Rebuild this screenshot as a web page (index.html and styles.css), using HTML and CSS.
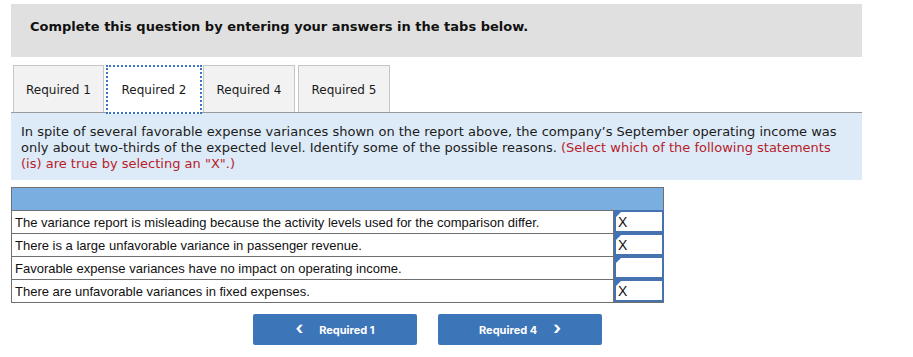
FILE: index.html
```html
<!DOCTYPE html>
<html>
<head>
<meta charset="utf-8">
<link rel="stylesheet" href="styles.css">
</head>
<body>
<div class="page">
  <div class="banner">Complete this question by entering your answers in the tabs below.</div>
  <div class="tabs">
    <div class="tab">Required 1</div>
    <div class="tab active">Required 2</div>
    <div class="tab">Required 4</div>
    <div class="tab">Required 5</div>
  </div>
  <div class="info">In spite of several favorable expense variances shown on the report above, the company’s September operating income was only about two-thirds of the expected level. Identify some of the possible reasons. <span class="red">(Select which of the following statements (is) are true by selecting an "X".)</span></div>
  <table class="grid">
    <tr class="head"><td colspan="2"></td></tr>
    <tr><td class="stmt">The variance report is misleading because the activity levels used for the comparison differ.</td><td class="ans"><div class="box">X</div></td></tr>
    <tr><td class="stmt">There is a large unfavorable variance in passenger revenue.</td><td class="ans"><div class="box">X</div></td></tr>
    <tr><td class="stmt">Favorable expense variances have no impact on operating income.</td><td class="ans"><div class="box"></div></td></tr>
    <tr><td class="stmt">There are unfavorable variances in fixed expenses.</td><td class="ans"><div class="box">X</div></td></tr>
  </table>
  <div class="nav">
    <div class="btn"><span class="chev">&lsaquo;</span><span>Required 1</span></div>
    <div class="btn"><span>Required 4</span><span class="chev">&rsaquo;</span></div>
  </div>
</div>
</body>
</html>
```
FILE: styles.css
```css
html, body { margin: 0; padding: 0; background: #fff; }
.page { padding: 4px 0 0 11px; width: 851px; font-family: "DejaVu Sans", Verdana, sans-serif; color: #222; }
.banner { background: #e0e0e0; height: 53px; box-sizing: border-box; padding: 15px 0 0 19px; font-weight: bold; font-size: 13px; color: #111; }
.tabs { display: flex; margin-top: 8px; padding-left: 2px; border-bottom: 1px solid #9a9a9a; height: 47px; box-sizing: content-box; }
.tab { box-sizing: border-box; height: 47px; padding-top: 2px; background: #f2f2f2; border: 1px solid #c6c6c6; border-bottom: none; font-size: 12px; color: #1a1a1a; display: flex; align-items: center; justify-content: center; margin-right: 2px; }
.tab:nth-child(1) { width: 91px; }
.tab:nth-child(2) { width: 96px; margin-right: 1px; }
.tab:nth-child(3) { width: 92px; margin-right: 3px; }
.tab:nth-child(4) { width: 92px; }
.tab.active { background: #fff; border: 2px dotted #3b73c4; height: 49px; margin-bottom: -2px; position: relative; padding-top: 0; }
.info { background: #dcebf7; margin-top: 0; padding: 11px 10px 9px 10px; font-size: 13px; line-height: 16px; color: #1c1c1c; height: 47px; }
.red { color: #b81c2b; }
.grid { margin-top: 7px; border-collapse: collapse; width: 653px; font-family: "Liberation Sans", Arial, sans-serif; font-size: 13px; }
.grid td { border: 1px solid #707070; height: 22px; padding: 0; }
.grid tr.head td { background: #7aade0; border-color: #707070; }
.stmt { padding-left: 3px !important; color: #111; width: 598px; }
.ans { width: 49px; vertical-align: top; }
.box { position: relative; box-sizing: border-box; height: 23px; border: 2px solid #4673b0; margin: -1px -1px -1px 0; font-size: 14px; line-height: 20px; padding-left: 2px; color: #111; }
.box::before { content: ""; position: absolute; left: 0; top: 0; border-left: 5px solid #3c74c4; border-bottom: 5px solid transparent; }
.nav { display: flex; gap: 21px; margin: 11px 0 0 242px; }
.btn { width: 164px; height: 31px; background: #3d76b8; border-radius: 2px; color: #fff; font-family: Inter, Roboto, sans-serif; font-weight: bold; font-size: 11px; display: flex; align-items: center; justify-content: center; gap: 16px; }
.chev { font-size: 18px; font-weight: bold; line-height: 1; margin-top: -3px; }
```
